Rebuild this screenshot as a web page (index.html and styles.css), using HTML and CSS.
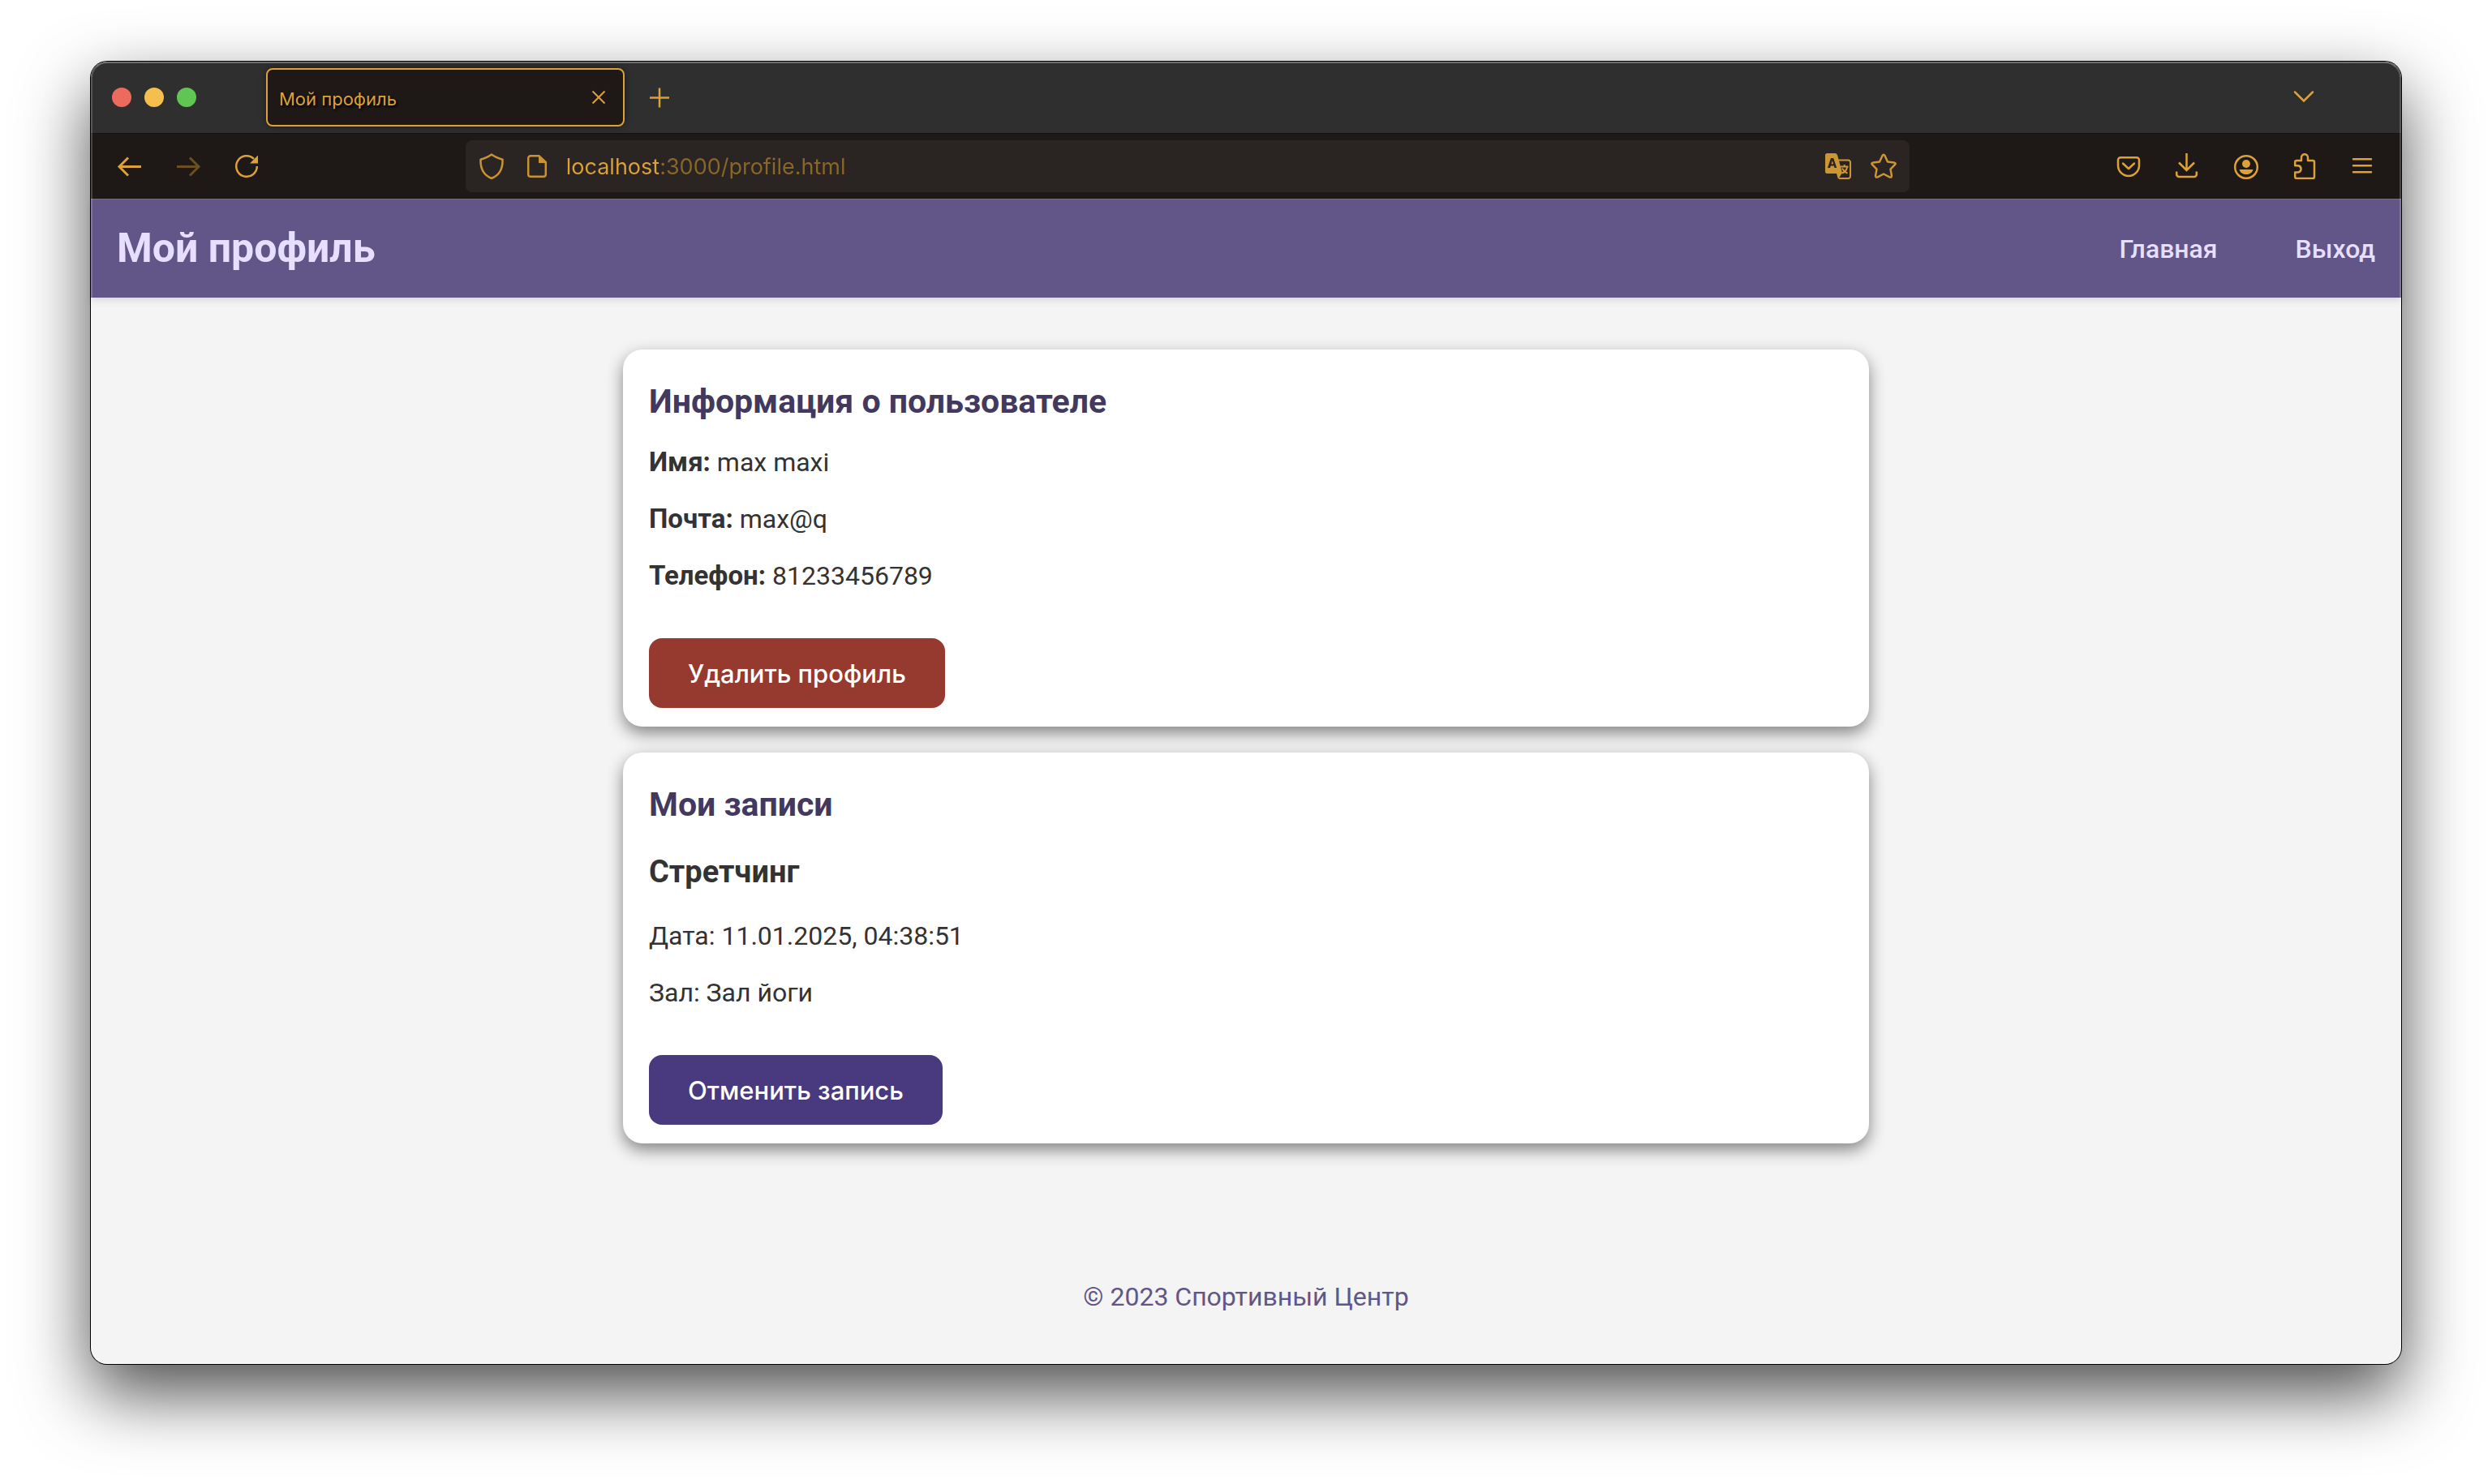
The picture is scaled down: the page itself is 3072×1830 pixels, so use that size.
FILE: index.html
```html
<!DOCTYPE html>
<html lang="ru">
<head>
<meta charset="utf-8">
<meta name="viewport" content="width=device-width, initial-scale=1">
<title>Мой профиль</title>
<link rel="stylesheet" href="styles.css">
</head>
<body>
<div class="window">
  <div class="tabstrip">
    <div class="lights">
      <button class="light light-close" aria-label="Закрыть окно"></button>
      <button class="light light-min" aria-label="Свернуть"></button>
      <button class="light light-max" aria-label="Развернуть"></button>
    </div>
    <div class="tab">
      <span class="tab-title">Мой профиль</span>
      <button class="icon-btn" aria-label="Закрыть вкладку">
        <svg class="icon" viewBox="0 0 32 32"><path d="M8.500 8.500l15 15M23.500 8.500l-15 15"/></svg>
      </button>
    </div>
    <button class="icon-btn new-tab" aria-label="Новая вкладка">
      <svg class="icon icon-bold" viewBox="0 0 32 32"><path d="M16 4.500v24M4 16.500h24"/></svg>
    </button>
    <button class="icon-btn all-tabs" aria-label="Список вкладок">
      <svg class="icon icon-bold" viewBox="0 0 32 32"><path d="M5 9.500l11 11 11-11" stroke-linecap="round"/></svg>
    </button>
  </div>

  <div class="toolbar">
    <div class="tools">
      <button class="icon-btn" aria-label="Назад">
        <svg class="icon icon-heavy" viewBox="0 0 32 32"><path d="M30 16.500H4M14 5.500l-11 11 11 11"/></svg>
      </button>
      <button class="icon-btn" aria-label="Вперёд" disabled>
        <svg class="icon icon-heavy" viewBox="0 0 32 32"><path d="M2 16.500h26M18 5.500l11 11-11 11"/></svg>
      </button>
      <button class="icon-btn" aria-label="Обновить">
        <svg class="icon icon-bold" viewBox="0 0 32 32"><path d="M28.800 16A12.800 12.800 0 1 1 25 6.900"/><path class="solid" d="M30 2.500V12.500H20z"/></svg>
      </button>
    </div>
    <div class="spacer"></div>
    <div class="urlbar">
      <svg class="icon icon-bold" viewBox="0 0 32 32"><path d="M16 1.500c4 3 8.500 4.800 13.500 6.300C30 19 26 27 16 31 6 27 2 19 2.500 7.800 7.500 6.300 12 4.500 16 1.500z" stroke-linejoin="round"/></svg>
      <svg class="icon icon-bold" viewBox="0 0 32 32"><path d="M18.500 3.200H8a2.800 2.800 0 0 0-2.800 2.800v20A2.800 2.800 0 0 0 8 28.800h16a2.800 2.800 0 0 0 2.800-2.800V11z"/><path class="solid" d="M18 2.500l9.500 9.500H18z"/></svg>
      <input class="url" type="text" value="localhost:3000/profile.html" aria-label="Адресная строка">
      <button class="icon-btn" aria-label="Перевести страницу">
        <svg class="icon" viewBox="0 0 32 32"><path d="M16 8.500h12.500a2.500 2.500 0 0 1 2.500 2.500v17.500a2.500 2.500 0 0 1-2.500 2.500H17"/><path class="solid" fill-rule="evenodd" d="M2.500 0H13l2 2 6 22-5 8-2-7H2.500A2.500 2.500 0 0 1 0 22.500v-20A2.500 2.500 0 0 1 2.500 0zM7 6L3 18h3l.8-2.500h4L11.600 18h2.600l-4-12zm1.800 3.200l1.300 4.100H7.500z"/><path d="M19 16.500h9.500M23.700 14v2.500M27 17c-.5 3.500-3 6.500-6.500 7.500M21 18.500c1.500 2.800 3.500 5 6.500 6"/></svg>
      </button>
      <button class="icon-btn" aria-label="Добавить в закладки">
        <svg class="icon icon-bold" viewBox="0 0 32 32"><path d="M14.400 3.200q1.600-2.800 3.200 0L21 10.500l7.800.9q3 .5 1 2.800L24.500 19.600l1.400 7.800q.2 3-2.600 1.900L16 25.500l-7.300 3.800q-2.800 1.100-2.600-1.900l1.400-7.800L2.200 14.200q-2-2.300 1-2.800l7.800-.9z" stroke-linejoin="round"/></svg>
      </button>
    </div>
    <div class="spacer"></div>
    <div class="tools">
      <button class="icon-btn" aria-label="Pocket">
        <svg class="icon icon-bold" viewBox="0 0 32 32"><path d="M6 5.200h20a3 3 0 0 1 3 3V15a13 13 0 0 1-26 0V8.200a3 3 0 0 1 3-3z"/><path d="M9 12.500l7 6.500 7-6.500" stroke-linecap="round" stroke-linejoin="round"/></svg>
      </button>
      <button class="icon-btn" aria-label="Загрузки">
        <svg class="icon icon-bold" viewBox="0 0 32 32"><path d="M15.500 0v21M6 11.500l9.500 9.500 9.500-9.500M3.200 22.500v3.500a3 3 0 0 0 3 3h18.600a3 3 0 0 0 3-3v-3.500"/></svg>
      </button>
      <button class="icon-btn" aria-label="Профиль">
        <svg class="icon icon-bold" viewBox="0 0 32 32"><circle cx="17" cy="17" r="13.800"/><circle class="solid" cx="17" cy="13" r="5"/><path class="solid" d="M8.500 20h17c-1 4-4.500 6-8.500 6s-7.500-2-8.500-6z"/></svg>
      </button>
      <button class="icon-btn" aria-label="Расширения">
        <svg class="icon icon-bold" viewBox="0 0 32 32"><path d="M5.200 15.200V11a2 2 0 0 1 2-2H13V5.200a4 4 0 0 1 8 0V9h6a2 2 0 0 1 2 2v18a2 2 0 0 1-2 2H7.200a2 2 0 0 1-2-2v-5.500H9a4.200 4.200 0 0 0 0-8.300z" stroke-linejoin="round"/></svg>
      </button>
      <button class="icon-btn" aria-label="Меню">
        <svg class="icon icon-bold" viewBox="0 0 32 32"><path d="M5 7.200h22M5 15.200h22M5 23.200h22" stroke-linecap="round"/></svg>
      </button>
    </div>
  </div>

  <div class="page">
    <header class="header">
      <h1 class="title">Мой профиль</h1>
      <nav class="nav">
        <a class="nav-link" href="#home">Главная</a>
        <a class="nav-link" href="#logout">Выход</a>
      </nav>
    </header>
    <main class="main">
      <section class="card">
        <h2 class="card-title">Информация о пользователе</h2>
        <p class="text"><strong>Имя:</strong> max maxi</p>
        <p class="text"><strong>Почта:</strong> max@q</p>
        <p class="text"><strong>Телефон:</strong> 81233456789</p>
        <button class="btn btn-danger">Удалить профиль</button>
      </section>
      <section class="card">
        <h2 class="card-title">Мои записи</h2>
        <h3 class="booking">Стретчинг</h3>
        <p class="text">Дата: 11.01.2025, 04:38:51</p>
        <p class="text">Зал: Зал йоги</p>
        <button class="btn btn-primary">Отменить запись</button>
      </section>
    </main>
    <footer class="footer">© 2023 Спортивный Центр</footer>
  </div>
</div>
</body>
</html>
```
FILE: styles.css
```css
:root {
  --gold: #dca137;
  --purple: #615687;
  --lilac: #e6dfff;
}

* {
  box-sizing: border-box;
}

body {
  margin: 0;
  padding: 76px 112px 148px;
  min-height: 100vh;
  display: flex;
  background: #fff;
  font-family: Roboto, "Liberation Sans", sans-serif;
  font-size: 32px;
  line-height: 38px;
  color: #333;
}

h1, h2, h3, p {
  margin: 0;
}

button {
  border: 0;
  padding: 0;
  background: none;
  font: inherit;
}

/* Browser window */
.window {
  position: relative;
  flex: 1;
  min-width: 0;
  display: flex;
  flex-direction: column;
  border-radius: 20px;
  background: #f4f4f4;
  box-shadow: 0 0 0 1px #000, 0 36px 86px rgba(0, 0, 0, 0.7);
}

.window::after {
  content: "";
  position: absolute;
  inset: 0;
  border: 2px solid rgba(255, 255, 255, 0.2);
  border-top-color: rgba(255, 255, 255, 0.3);
  border-radius: 20px;
  pointer-events: none;
}

.tabstrip {
  display: flex;
  align-items: center;
  height: 89px;
  padding: 0 104px 0 26px;
  border-bottom: 1px solid #141212;
  border-radius: 20px 20px 0 0;
  background: #2f2f2f;
}

.lights {
  display: flex;
  gap: 16px;
  margin-right: 86px;
}

.light {
  width: 24px;
  height: 24px;
  border-radius: 50%;
}

.light-close { background: #ed6a5f; }
.light-min { background: #f5bf4f; }
.light-max { background: #61c554; }

.tab {
  display: flex;
  align-items: center;
  justify-content: space-between;
  width: 442px;
  height: 72px;
  padding: 0 14px;
  border: 2px solid var(--gold);
  border-radius: 8px;
  background: #1e1817;
  box-shadow: 0 0 8px rgba(0, 0, 0, 0.4);
}

.tab-title {
  padding-top: 4px;
  font-family: Inter, sans-serif;
  font-size: 22px;
  line-height: 28px;
  color: var(--gold);
  text-shadow: 2px 2px 3px #000;
}

.new-tab {
  margin-left: 27px;
}

.all-tabs {
  margin-left: auto;
}

.icon-btn {
  display: block;
  flex: none;
  width: 32px;
  height: 32px;
  color: var(--gold);
}

.icon-btn:disabled {
  opacity: 0.4;
}

.icon {
  display: block;
  flex: none;
  width: 32px;
  height: 32px;
  fill: none;
  stroke: currentColor;
  stroke-width: 2;
}

.icon-bold { stroke-width: 2.5; }
.icon-heavy { stroke-width: 3; }

.icon .solid {
  fill: currentColor;
  stroke: none;
}

.toolbar {
  display: flex;
  align-items: center;
  height: 81px;
  padding: 0 32px;
  border-bottom: 1px solid #77736b;
  background: #1e1817;
}

.tools {
  display: flex;
  gap: 40px;
}

.spacer {
  flex: 1 1 4px;
}

.urlbar {
  flex: 7 1 0;
  min-width: 0;
  display: flex;
  align-items: center;
  gap: 24px;
  height: 64px;
  padding: 0 16px;
  border-radius: 8px;
  background: #2a2423;
  color: #c99332;
}

.urlbar .icon-btn {
  color: #cd9634;
}

/* The host is brighter than the rest of the address */
.url {
  flex: 1;
  min-width: 0;
  margin-left: -4px;
  padding: 2px 0 0;
  border: 0;
  outline: 0;
  font-family: Inter, sans-serif;
  font-size: 27px;
  line-height: 36px;
  color: var(--gold);
  background: linear-gradient(90deg, var(--gold) 114px, #8a6628 114px);
  -webkit-background-clip: text;
  background-clip: text;
  -webkit-text-fill-color: transparent;
}

/* Page */
.page {
  flex: 1;
  display: flex;
  flex-direction: column;
}

.header {
  display: flex;
  align-items: center;
  justify-content: space-between;
  padding: 32px;
  background: var(--purple);
  box-shadow: 0 4px 8px rgba(0, 0, 0, 0.1);
}

.title {
  font-size: 50px;
  line-height: 57px;
  font-weight: 700;
  color: var(--lilac);
}

.nav {
  display: flex;
  gap: 96px;
}

.nav-link {
  font-weight: 500;
  color: var(--lilac);
  text-decoration: none;
}

.main {
  flex: 1;
  display: flex;
  flex-direction: column;
  gap: 32px;
  width: 100%;
  max-width: 1536px;
  margin: 0 auto;
  padding: 64px 0;
}

.card {
  display: flex;
  flex-direction: column;
  align-items: flex-start;
  gap: 32px;
  padding: 40px 32px 23px;
  border-radius: 24px;
  background: #fff;
  box-shadow: 0 8px 20px rgba(0, 0, 0, 0.46);
}

.card-title {
  font-size: 41px;
  line-height: 48px;
  font-weight: 700;
  color: #43395f;
}

.booking {
  margin: 5px 0 6px;
  font-size: 38px;
  line-height: 44px;
  font-weight: 700;
}

.text strong {
  font-size: 33px;
}

.btn {
  margin-top: 26px;
  padding: 25px 48px 23px;
  border-radius: 16px;
  font-family: Inter, sans-serif;
  font-size: 31px;
  font-weight: 500;
  color: #fff;
}

.btn-danger { background: #963a2f; }
.btn-primary { background: #49397f; }

.footer {
  padding: 0 32px 64px;
  text-align: center;
  color: var(--purple);
}
```
